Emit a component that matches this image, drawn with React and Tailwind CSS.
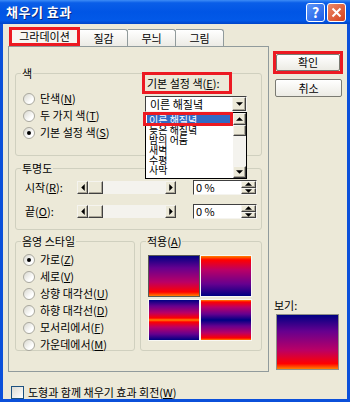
import React from "react";

// 3D classic button look (scroll arrows, thumbs)
const bevel =
  "bg-[#ECE9D8] border border-t-[#F5F4EF] border-l-[#F5F4EF] border-r-[#404040] border-b-[#404040] shadow-[inset_-1px_-1px_0_#ACA899]";

const Tri = ({ dir = "down" }) => {
  const pts = {
    down: "0,0 6,0 3,3",
    up: "0,3 6,3 3,0",
    left: "3,0 3,6 0,3",
    right: "0,0 0,6 3,3",
  }[dir];
  const w = dir === "left" || dir === "right" ? 4 : 7;
  const h = dir === "left" || dir === "right" ? 7 : 4;
  return (
    <svg width={w} height={h} viewBox={`0 0 ${w - 1} ${h - 1}`}>
      <polygon points={pts} fill="#000" />
    </svg>
  );
};

const Radio = ({ checked, children }) => (
  <div className="flex items-center h-[13px] gap-[5px]">
    <div className="w-[12px] h-[12px] rounded-full border border-[#A9A89E] bg-[linear-gradient(135deg,#D8D7CE,#FFFFFF_70%)] flex items-center justify-center">
      {checked && <div className="w-[4px] h-[4px] rounded-full bg-black" />}
    </div>
    <span className="leading-[13px] whitespace-nowrap">{children}</span>
  </div>
);

const Group = ({ label, className, children }) => (
  <div
    className={`relative border border-[#D0D0BF] rounded-[3px] ${className}`}
  >
    <span className="absolute -top-[8px] left-[5px] px-[1px] bg-[#ECE9D8] leading-[14px]">
      {label}
    </span>
    {children}
  </div>
);

const Slider = () => (
  <div className="flex w-[99px] h-[13px]">
    <div className={`w-[11px] ${bevel} flex items-center justify-center`}>
      <Tri dir="left" />
    </div>
    <div className={`w-[15px] ${bevel}`} />
    <div className="flex-1 bg-[#F4F3EE]" />
    <div className={`w-[11px] ${bevel} flex items-center justify-center`}>
      <Tri dir="right" />
    </div>
  </div>
);

const SpinField = () => (
  <div className="flex w-[64px] h-[15px] ml-[17px] border border-t-[#404040] border-l-[#404040] border-r-[#F5F4EF] border-b-[#F5F4EF] bg-white">
    <span className="flex-1 pl-[2px] leading-[13px]">0 %</span>
    <div className="w-[15px] flex flex-col">
      <div className={`flex-1 ${bevel} flex items-center justify-center`}>
        <Tri dir="up" />
      </div>
      <div className={`flex-1 ${bevel} flex items-center justify-center`}>
        <Tri dir="down" />
      </div>
    </div>
  </div>
);

const Swatch = ({ grad, selected }) => (
  <div
    className={`h-[42px] border ${
      selected ? "border-[#5A5A55]" : "border-[#F8F8F4]"
    }`}
  >
    <div className={`w-full h-full ${grad}`} />
  </div>
);

const presets = ["이른 해질녘", "늦은 해질녘", "밤의 어둠", "새벽", "수평", "사막"];

const U = ({ children }) => <span className="underline">{children}</span>;

export default function App() {
  return (
    <div className="w-[350px] h-[402px] bg-[#0B50DA] flex flex-col overflow-hidden text-[11px] text-black [font-family:'Noto_Sans_CJK_KR',sans-serif]">
      {/* Title bar */}
      <div className="h-[25px] flex items-center pl-[6px] pr-[4px] bg-[linear-gradient(to_bottom,#3D8CF6_0%,#0A5EE8_12%,#0055E5_50%,#0259E8_85%,#0044C8_100%)]">
        <span className="text-white text-[13px] font-bold tracking-[0.5px] [text-shadow:1px_1px_0_#0A2A80]">
          채우기 효과
        </span>
        <div className="ml-auto flex gap-[2px]">
          <div className="w-[19px] h-[19px] rounded-[3px] border border-white bg-[linear-gradient(135deg,#5D96F8,#1A5BE6)] flex items-center justify-center text-white font-bold text-[14px] leading-none">
            ?
          </div>
          <div className="w-[19px] h-[19px] rounded-[3px] border border-white bg-[linear-gradient(135deg,#EB8A6A,#D5401B)] flex items-center justify-center">
            <svg width="11" height="11" viewBox="0 0 11 11">
              <path
                d="M1.5 1.5 L9.5 9.5 M9.5 1.5 L1.5 9.5"
                stroke="#fff"
                strokeWidth="2"
              />
            </svg>
          </div>
        </div>
      </div>

      {/* Body */}
      <div className="flex-1 mx-[3px] mb-[3px] bg-[#ECE9D8] pt-[3px] pl-[5px] flex flex-col">
        <div className="flex">
          {/* Left: tabs + pane */}
          <div className="w-[261px] flex flex-col">
            <div className="h-[19px] flex items-end">
              <div className="ml-[1px] w-[71px] h-[19px] border-[3px] border-[#EC1A22] bg-[#F7F6F1] flex items-center justify-center leading-none">
                그라데이션
              </div>
              {["질감", "무늬", "그림"].map((t) => (
                <div
                  key={t}
                  className="w-[48px] h-[17px] border-t border-r border-[#919B9C] rounded-tr-[3px] bg-[linear-gradient(to_bottom,#FFFFFF,#ECEBE5)] flex items-center justify-center leading-none"
                >
                  {t}
                </div>
              ))}
            </div>

            <div className="h-[326px] border border-[#919B9C] bg-[#ECE9D8] px-[6px] pt-[26px] flex flex-col">
              {/* 색 */}
              <Group label="색" className="h-[83px] flex z-10">
                <div className="w-[126px] pt-[18px] pl-[7px] flex flex-col gap-[4px]">
                  <Radio>
                    단색(<U>N</U>)
                  </Radio>
                  <Radio>
                    두 가지 색(<U>T</U>)
                  </Radio>
                  <Radio checked>
                    기본 설정 색(<U>S</U>)
                  </Radio>
                </div>
                <div className="flex flex-col -mt-[2px]">
                  <div className="w-[90px] h-[22px] border-[3px] border-[#EC1A22] pl-[2px] flex items-center whitespace-nowrap">
                    기본 설정 색(<U>E</U>):
                  </div>
                  <div className="relative ml-[3px] mt-[2px] w-[102px] h-[16px]">
                    <div className="h-full flex border border-t-[#404040] border-l-[#404040] border-r-[#F5F4EF] border-b-[#F5F4EF] bg-white">
                      <span className="flex-1 pl-[4px] leading-[14px]">
                        이른 해질녘
                      </span>
                      <div
                        className={`w-[14px] ${bevel} flex items-center justify-center`}
                      >
                        <Tri dir="down" />
                      </div>
                    </div>

                    {/* dropdown list */}
                    <div className="absolute left-0 top-full w-[102px] h-[67px] bg-white border border-black flex">
                      <div className="relative flex-1 pt-[2px] pl-[1px] text-[10px]">
                        {presets.map((p, i) => (
                          <div
                            key={p}
                            className={`h-[10px] leading-[10px] pl-[2px] whitespace-nowrap ${
                              i === 0 ? "bg-[#316AC5] text-white" : ""
                            }`}
                          >
                            {p}
                          </div>
                        ))}
                        <div className="absolute -left-[3px] -top-[1px] w-[90px] h-[14px] border-[3px] border-[#EC1A22]" />
                      </div>
                      <div className="w-[13px] flex flex-col bg-[#F4F3EE]">
                        <div
                          className={`h-[12px] ${bevel} flex items-center justify-center`}
                        >
                          <Tri dir="up" />
                        </div>
                        <div className={`h-[11px] ${bevel}`} />
                        <div className="flex-1" />
                        <div
                          className={`h-[12px] ${bevel} flex items-center justify-center`}
                        >
                          <Tri dir="down" />
                        </div>
                      </div>
                    </div>
                  </div>
                </div>
              </Group>

              {/* 투명도 */}
              <Group label="투명도" className="mt-[12px] h-[62px]">
                <div className="pt-[11px] pl-[9px] flex flex-col gap-[9px]">
                  <div className="flex items-center h-[15px]">
                    <span className="w-[52px] whitespace-nowrap">
                      시작(<U>R</U>):
                    </span>
                    <Slider />
                    <SpinField />
                  </div>
                  <div className="flex items-center h-[15px]">
                    <span className="w-[52px] whitespace-nowrap">
                      끝(<U>O</U>):
                    </span>
                    <Slider />
                    <SpinField />
                  </div>
                </div>
              </Group>

              <div className="mt-[11px] flex gap-[5px]">
                {/* 음영 스타일 */}
                <Group label="음영 스타일" className="w-[120px] h-[110px]">
                  <div className="pt-[11px] pl-[7px] flex flex-col gap-[4px]">
                    <Radio checked>
                      가로(<U>Z</U>)
                    </Radio>
                    <Radio>
                      세로(<U>V</U>)
                    </Radio>
                    <Radio>
                      상향 대각선(<U>U</U>)
                    </Radio>
                    <Radio>
                      하향 대각선(<U>D</U>)
                    </Radio>
                    <Radio>
                      모서리에서(<U>F</U>)
                    </Radio>
                    <Radio>
                      가운데에서(<U>M</U>)
                    </Radio>
                  </div>
                </Group>

                {/* 적용 */}
                <Group label={<>적용(<U>A</U>)</>} className="w-[122px] h-[110px]">
                  <div className="pt-[13px] pl-[7px] grid grid-cols-[52px_52px] gap-y-[2px]">
                    <Swatch
                      selected
                      grad="bg-[linear-gradient(to_bottom,#000082_0%,#66008F_30%,#BA0066_65%,#FF0000_90%,#FF8200_100%)]"
                    />
                    <Swatch grad="bg-[linear-gradient(to_top,#000082_0%,#66008F_30%,#BA0066_65%,#FF0000_90%,#FF8200_100%)]" />
                    <Swatch grad="bg-[linear-gradient(to_bottom,#000082_0%,#66008F_15%,#BA0066_32%,#FF0000_45%,#FF8200_50%,#FF0000_55%,#BA0066_68%,#66008F_85%,#000082_100%)]" />
                    <Swatch grad="bg-[linear-gradient(to_bottom,#FF8200_0%,#FF0000_5%,#BA0066_18%,#66008F_35%,#000082_50%,#66008F_65%,#BA0066_82%,#FF0000_95%,#FF8200_100%)]" />
                  </div>
                </Group>
              </div>
            </div>
          </div>

          {/* Right: buttons + preview */}
          <div className="flex-1 pl-[4px] flex flex-col">
            <div className="mt-[24px] w-[70px] h-[23px] border-[3px] border-[#EC1A22]">
              <div className="w-full h-full border border-[#7A7A72] rounded-[2px] bg-[linear-gradient(to_bottom,#FFFFFF,#ECEBE4)] flex items-center justify-center leading-none">
                확인
              </div>
            </div>
            <div className="mt-[5px] ml-[2px] w-[67px] h-[18px] border border-[#7A7A72] rounded-[2px] bg-[linear-gradient(to_bottom,#FFFFFF,#ECEBE4)] flex items-center justify-center leading-none">
              취소
            </div>

            <div className="mt-auto pb-[2px]">
              <div className="pl-[1px] leading-[14px] mb-[2px]">보기:</div>
              <div className="ml-[3px] w-[63px] h-[56px] border border-[#8F8F88] bg-[linear-gradient(to_bottom,#000082_0%,#66008F_30%,#BA0066_65%,#FF0000_90%,#FF8200_100%)]" />
            </div>
          </div>
        </div>

        {/* rotate with shape */}
        <div className="mt-[14px] ml-[3px] flex items-center gap-[4px] h-[13px]">
          <div className="w-[13px] h-[13px] border border-[#1C5180] bg-[linear-gradient(135deg,#DCDBD3,#FFFFFF)]" />
          <span className="leading-[13px]">
            도형과 함께 채우기 효과 회전(<U>W</U>)
          </span>
        </div>
      </div>
    </div>
  );
}
